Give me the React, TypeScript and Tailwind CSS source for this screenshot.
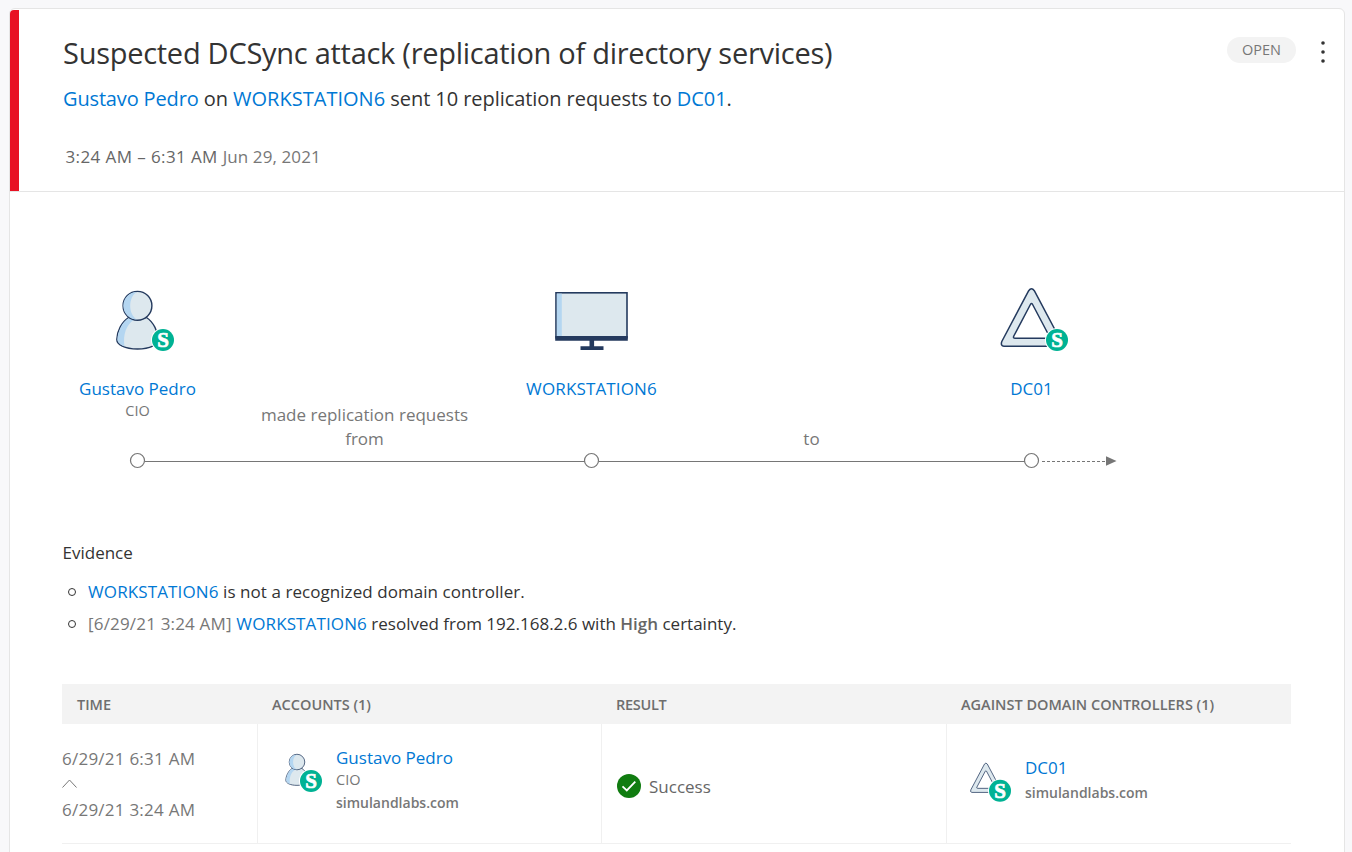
import type { ReactNode } from "react";

function Badge({ cx, cy }: { cx: number; cy: number }) {
  return (
    <g>
      <circle cx={cx} cy={cy} r="12" fill="#fff" />
      <circle cx={cx} cy={cy} r="11" fill="#00b294" />
      <text x={cx} y={cy + 7} textAnchor="middle" fill="#fff" stroke="#fff" strokeWidth="0.7" className="font-['Liberation_Serif',serif] text-[21px] font-bold">S</text>
    </g>
  );
}

function UserShape() {
  return (
    <g stroke="#243a5e" strokeWidth="1.4">
      <path d="M31 37.5C24 42 19.3 52 19.3 59.5C19.3 64.5 27 69 40 69C53 69 60.7 64.5 60.7 59.5C60.7 52 56 42 49 37.5Z" fill="#dde8ee" />
      <path d="M31 38.3C24.8 42 20 52 20 59.5C20 62.2 22.5 64.8 27 66.4C25.3 55 28.5 44.5 37 39.5Z" fill="#b4d6f1" stroke="none" />
      <circle cx="40" cy="25.8" r="14.4" fill="#dde8ee" />
      <path d="M39.5 12.1A13.7 13.7 0 0 0 39.5 39.5C30.5 35 30.5 16.5 39.5 12.1Z" fill="#b4d6f1" stroke="none" />
    </g>
  );
}

function TriangleShape() {
  return (
    <g stroke="#243a5e" strokeWidth="1.5" strokeLinejoin="round">
      <path fillRule="evenodd" fill="#dde8ee" d="M37.200 10.700Q40 6.800 42.800 10.700L70 62Q71.500 66.300 67.500 66.300H12.500Q8.800 65.800 10.300 61.500ZM38.900 24.500L22.300 56Q21.300 58.300 23.600 58.300H56.400Q58.700 58.300 57.700 56L41.100 24.500Q40 22.500 38.900 24.500Z" />
    </g>
  );
}

function Link({ children, className = "" }: { children: ReactNode; className?: string }) {
  return <span className={`text-[#0078d4] ${className}`}>{children}</span>;
}

function Th({ children, className = "" }: { children: ReactNode; className?: string }) {
  return <div className={`pt-px pl-[15px] text-[14.5px] leading-[40px] font-semibold text-[#6e6e6e] ${className}`}>{children}</div>;
}

export default function App() {
  return (
    <div className="h-[852px] overflow-hidden bg-[#f8f8fa] pt-2 pl-[9px] font-['Open_Sans','Noto_Sans',sans-serif] text-[#333]">
      <main className="h-[900px] w-[1336px] rounded-md border border-[#e5e5e5] bg-white">
        <header className="flex h-[183px] border-b border-[#e5e5e5] pt-px">
          <div className="w-[9px] shrink-0 rounded-tl-[4px] bg-[#e81123]" />
          <div className="flex-1 pt-[23px] pl-[44px] whitespace-nowrap">
            <h1 className="w-fit text-[29px] leading-[40px] tracking-[-0.27px]">Suspected DCSync attack (replication of directory services)</h1>
            <p className="mt-[12px] w-fit text-[20px] leading-[28px] tracking-[-0.06px]">
              <Link className="tracking-[-0.15px]">Gustavo Pedro</Link> on <Link className="tracking-[0.02px]">WORKSTATION6</Link> sent 10 replication requests to <Link>DC01</Link>.
            </p>
            <p className="mt-[32px] ml-[2.500px] w-fit text-[17px] leading-[24px] text-[#777]">
              <span className="tracking-[0.4px] text-[#666]">3:24 AM – 6:31 AM </span>
              <span className="tracking-[0.1px]">Jun 29, 2021</span>
            </p>
          </div>
          <div className="flex items-start pt-[27px]">
            <span className="flex h-[26px] w-[69px] items-center justify-center rounded-full bg-[#f3f3f3] text-[14.5px] text-[#777]">OPEN</span>
            <svg width="48" height="30" viewBox="0 0 48 30" fill="#333"><circle cx="27" cy="6" r="1.8" /><circle cx="27" cy="15" r="1.8" /><circle cx="27" cy="24" r="1.8" /></svg>
          </div>
        </header>

        <section className="pt-[88px] pl-[53px]">
          <div className="flex h-[172px] text-center text-[17px] leading-[24px]">
            <div className="flex w-[149px] flex-col items-center">
              <svg width="80" height="80" viewBox="0.5 0 80 80"><UserShape /><Badge cx={65.5} cy={60} /></svg>
              <Link className="mt-[17px]">Gustavo Pedro</Link>
              <span className="text-[14.5px] leading-[20px] text-[#777]">CIO</span>
            </div>
            <div className="w-[305px] px-10 pt-[123px] text-[#777]">made replication requests<br />from</div>
            <div className="flex w-[149px] flex-col items-center">
              <svg width="80" height="80" viewBox="0.5 0 80 80">
                <rect x="4.5" y="12.8" width="71" height="45" fill="#dde8ee" stroke="#243a5e" strokeWidth="1.6" />
                <rect x="5.3" y="13.6" width="5" height="43" fill="#b4d6f1" />
                <path fill="#243a5e" d="M3.7 56h72.6v4.800H42.600v5.500H52v3.700H29v-3.700h9V60.800H3.700Z" />
              </svg>
              <Link className="mt-[17px] tracking-[0.15px]">WORKSTATION6</Link>
            </div>
            <div className="w-[291px] pt-[147px] text-[#777]">to</div>
            <div className="flex w-[149px] flex-col items-center">
              <svg width="80" height="80" viewBox="0.5 0 80 80"><TriangleShape /><Badge cx={65.5} cy={60} /></svg>
              <Link className="mt-[17px]">DC01</Link>
            </div>
          </div>
          <svg width="1070" height="20" viewBox="0 0 1070 20" stroke="#767676" fill="none">
            <path d="M82 9.500H522M536 9.500H962" />
            <path d="M979 9.500H1043" strokeDasharray="3 2" />
            <path d="M1043 4.200L1053.500 9L1043 13.800Z" fill="#767676" stroke="none" />
            <g fill="#fff" strokeWidth="1.2"><circle cx="74.500" cy="8.500" r="7" /><circle cx="528.500" cy="8.500" r="7" /><circle cx="968.500" cy="8.500" r="7" /></g>
          </svg>
        </section>

        <section className="px-[52.5px] pt-[69px] text-[17px] leading-[24px]">
          <h2 className="w-fit">Evidence</h2>
          <ul className="mt-[11px] leading-[32px] whitespace-nowrap">
            <li className="flex items-center gap-[12px] pl-[5.500px]">
              <i className="size-[8px] rounded-full border border-[#333]" />
              <span className="tracking-[0.06px]"><Link className="tracking-[0.12px]">WORKSTATION6</Link> is not a recognized domain controller.</span>
            </li>
            <li className="flex items-center gap-[12px] pl-[5.500px]">
              <i className="size-[8px] rounded-full border border-[#333]" />
              <span><span className="tracking-[0.18px] text-[#777]">[6/29/21 3:24 AM] </span><Link className="tracking-[0.12px]">WORKSTATION6</Link> resolved from 192.168.2.6 with <b className="font-semibold text-[#666]">High</b> certainty.</span>
            </li>
          </ul>
        </section>

        <section className="mt-[44px] ml-[52px] w-[1229px]">
          <div className="grid h-[40px] grid-cols-[195px_344px_345px_345px] bg-[#f3f3f3]">
            <Th>TIME</Th>
            <Th>ACCOUNTS (1)</Th>
            <Th className="tracking-[-0.3px]">RESULT</Th>
            <Th>AGAINST DOMAIN CONTROLLERS (1)</Th>
          </div>
          <div className="grid h-[120px] grid-cols-[195px_344px_345px_345px] border-b border-[#f0f0f0] text-[17px] leading-[24px] text-[#777]">
            <div className="flex flex-col pt-[23px] tracking-[0.24px]">
              <span>6/29/21 6:31 AM</span>
              <svg className="my-[6px]" width="16" height="15" viewBox="0 0 16 15" fill="none" stroke="#777"><path d="M.5 10.500L7.500 3L14.500 10.500" /></svg>
              <span>6/29/21 3:24 AM</span>
            </div>
            <div className="flex border-l border-[#f0f0f0] pt-[22px] pl-[20px]">
              <svg width="50" height="54" viewBox="0 0 50 54"><g transform="translate(-2.6 2.1) scale(.54)"><UserShape /></g><Badge cx={33} cy={35} /></svg>
              <div className="flex flex-col pl-[8px]">
                <Link>Gustavo Pedro</Link>
                <span className="text-[14.5px] leading-[20px]">CIO</span>
                <span className="text-[14px] leading-[26px] font-semibold">simulandlabs.com</span>
              </div>
            </div>
            <div className="flex items-center border-l border-[#f0f0f0] pt-[5px] pl-[15px]">
              <svg width="24" height="24" viewBox="0 0 24 24"><circle cx="12" cy="12" r="12" fill="#107c10" /><path d="M5.500 12.400L9.800 16.500L18.300 7.700" fill="none" stroke="#fff" strokeWidth="1.8" /></svg>
              <span className="pt-[2px] pl-[8px] text-[#666]">Success</span>
            </div>
            <div className="flex border-l border-[#f0f0f0] pt-[32px] pl-[20px]">
              <svg width="50" height="54" viewBox="0 0 50 54"><g transform="translate(-1.5 2.6) scale(.51)"><TriangleShape /></g><Badge cx={33} cy={34.8} /></svg>
              <div className="flex flex-col pl-[8px]">
                <Link>DC01</Link>
                <span className="text-[14px] leading-[26px] font-semibold">simulandlabs.com</span>
              </div>
            </div>
          </div>
        </section>
      </main>
    </div>
  );
}
